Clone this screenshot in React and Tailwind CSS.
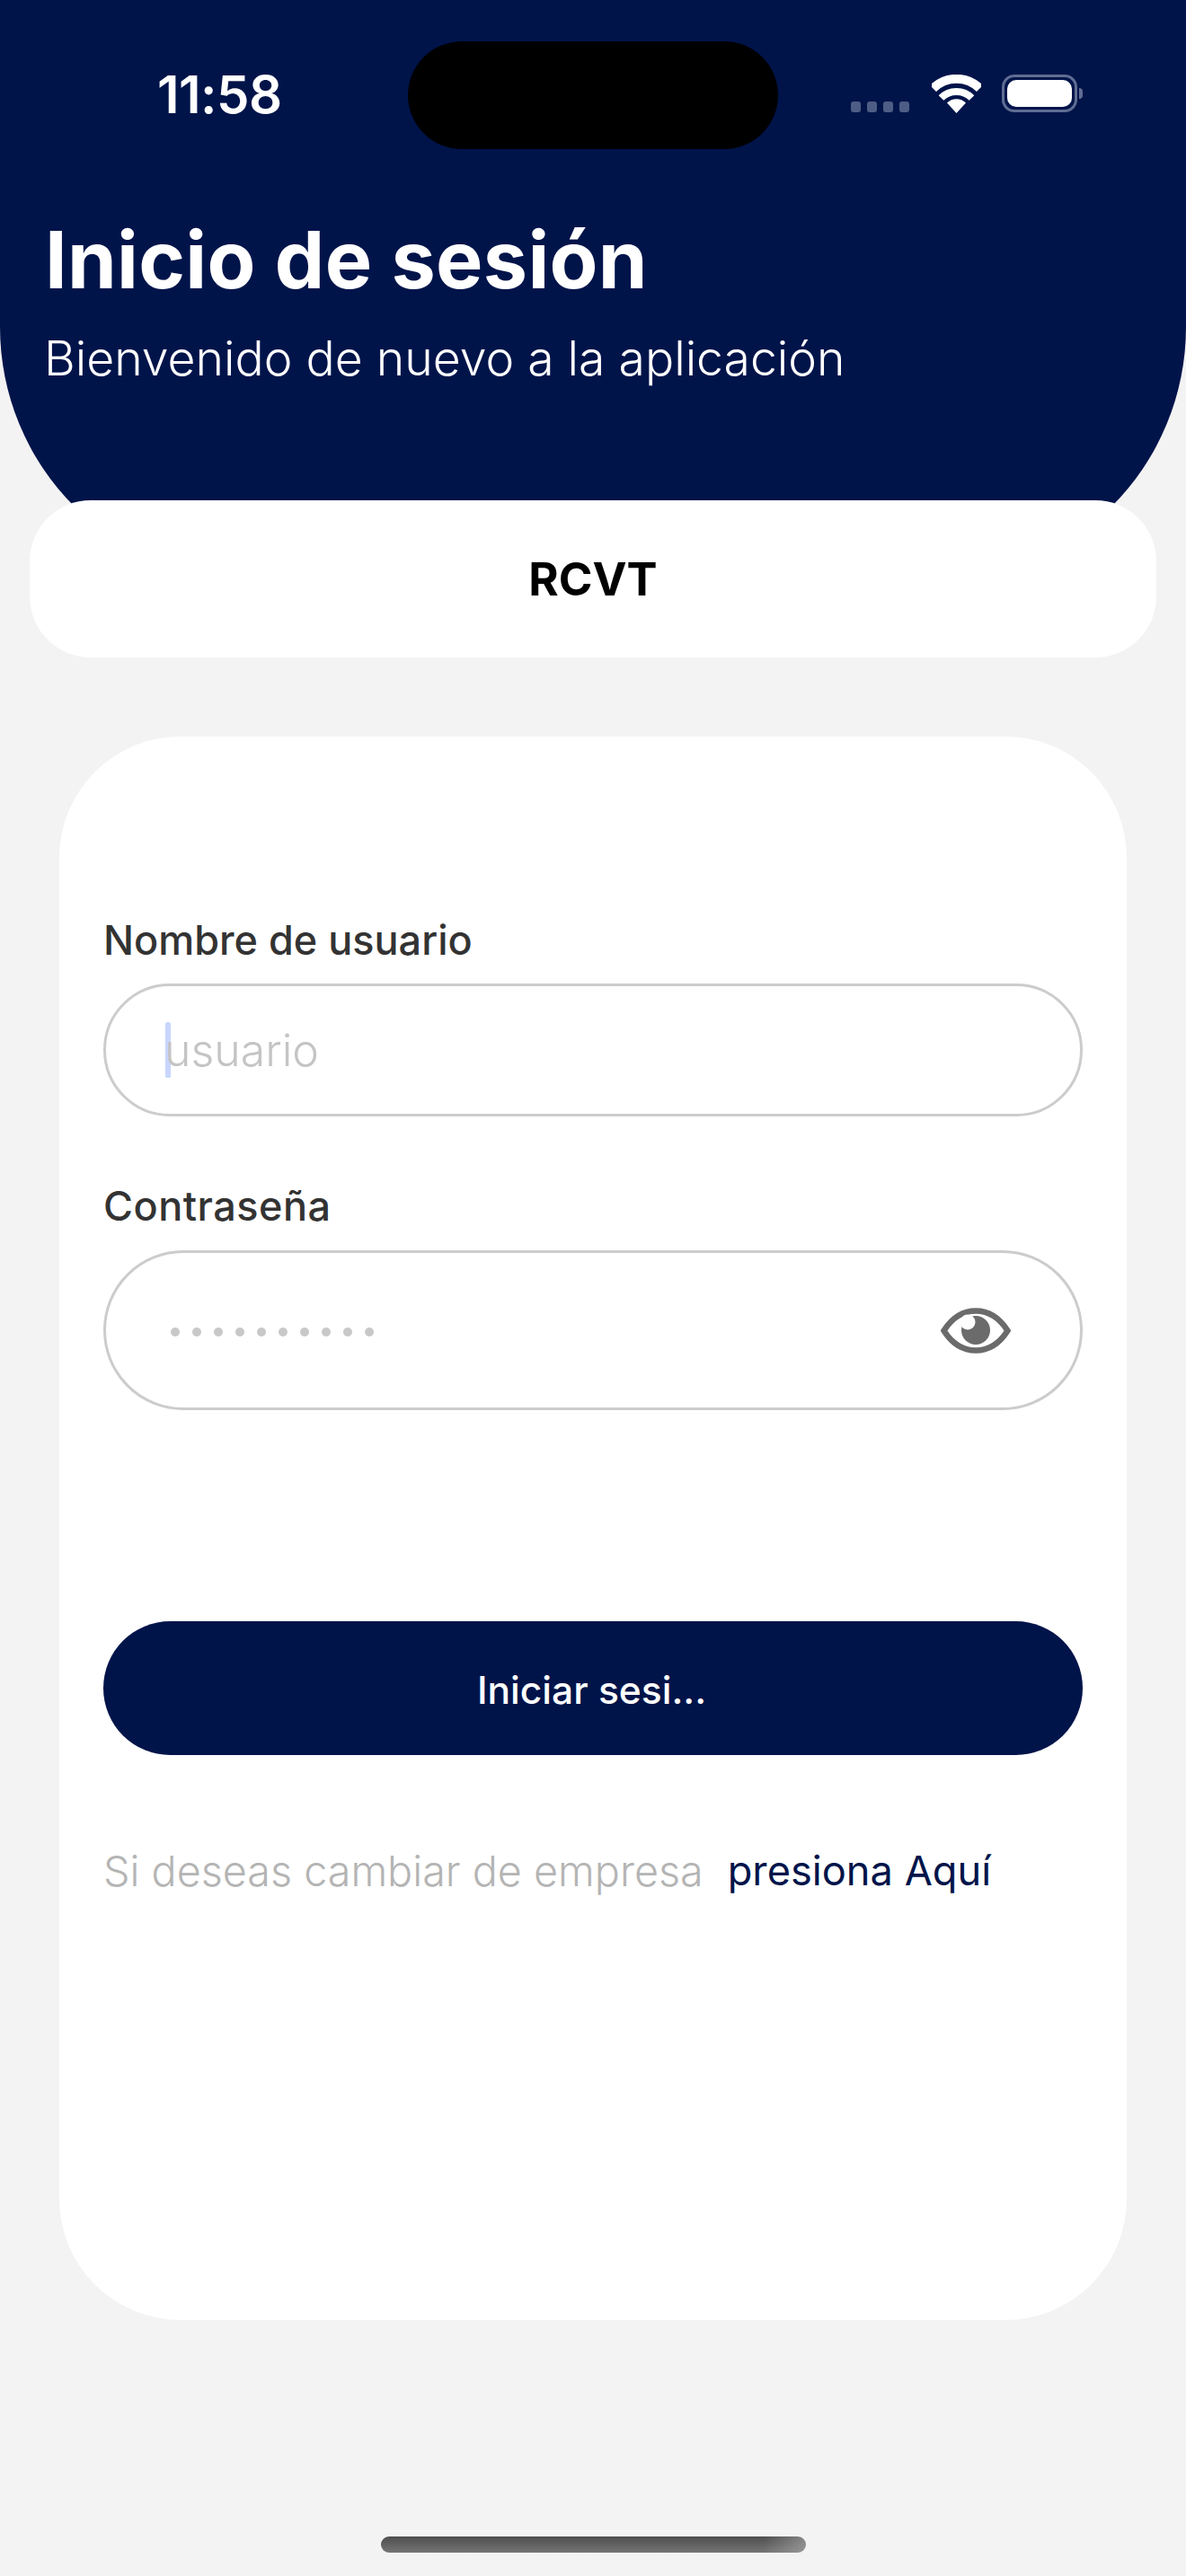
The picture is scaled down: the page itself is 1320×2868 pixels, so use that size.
import React from 'react'

function WifiIcon() {
  return (
    <svg viewBox="0 0 55 43" className="w-[55px] h-[43px]" fill="none">
      <path d="M1.5 15.5A37 37 0 0 1 53.5 15.5" stroke="#fff" strokeWidth="10" />
      <path d="M10.5 26A24 24 0 0 1 44.5 26" stroke="#fff" strokeWidth="8" />
      <path d="M27.5 43L17 31.5A15 15 0 0 1 38 31.5Z" fill="#fff" />
    </svg>
  )
}

function EyeIcon() {
  return (
    <svg viewBox="0 0 78 51" className="w-[78px] h-[51px]" fill="none">
      <path
        d="M3.5 25.5C14 9 26 3.5 39 3.5C52 3.5 64 9 74.5 25.5C64 42 52 47.5 39 47.5C26 47.5 14 42 3.5 25.5Z"
        stroke="#6b6b6b"
        strokeWidth="6.5"
      />
      <circle cx="39" cy="25" r="16" fill="#6b6b6b" />
      <circle cx="30" cy="16" r="8.5" fill="#fff" />
    </svg>
  )
}

export default function App() {
  return (
    <div className="w-[1320px] h-[2868px] bg-[#f3f3f3] flex flex-col items-center overflow-hidden font-['Inter',sans-serif]">
      {/* Header */}
      <div className="w-full h-[647px] shrink-0 bg-[#00144a] rounded-b-[283px] flex flex-col text-white">
        <div className="flex items-start pt-[46px] h-[166px] shrink-0">
          <div className="w-[175px] shrink-0" />
          <span className="w-[279px] shrink-0 mt-[29px] text-[58px] leading-[60px] font-semibold tracking-[-0.5px]">11:58</span>
          <div className="w-[412px] h-[120px] shrink-0 rounded-[60px] bg-black" />
          <div className="flex ml-[81px] mt-[67px] gap-[7px]">
            <span className="w-[11px] h-[12px] rounded-[3px] bg-[#4e5d85]" />
            <span className="w-[11px] h-[12px] rounded-[3px] bg-[#4e5d85]" />
            <span className="w-[11px] h-[12px] rounded-[3px] bg-[#4e5d85]" />
            <span className="w-[11px] h-[12px] rounded-[3px] bg-[#4e5d85]" />
          </div>
          <div className="ml-[25px] mt-[37px]">
            <WifiIcon />
          </div>
          <div className="flex items-center ml-[23px] mt-[37px]">
            <div className="w-[84px] h-[42px] rounded-[14px] border-[3px] border-[#5f6d92] p-[3px]">
              <div className="w-full h-full rounded-[10px] bg-white" />
            </div>
            <div className="w-[4px] h-[12px] rounded-r-full bg-[#5f6d92] ml-[2px]" />
          </div>
        </div>
        <h1 className="mt-[73px] ml-[50px] text-[88px] leading-[100px] font-bold tracking-[0.3px]">Inicio de sesión</h1>
        <p className="mt-[30px] ml-[49px] text-[53.5px] leading-[60px] font-light">Bienvenido de nuevo a la aplicación</p>
      </div>

      {/* Empresa */}
      <div className="w-[1254px] h-[175px] shrink-0 -mt-[90px] rounded-[68px] bg-white flex items-center justify-center">
        <span className="text-[51px] leading-[60px] font-bold text-black">RCVT</span>
      </div>

      {/* Formulario */}
      <div className="w-[1188px] h-[1763px] shrink-0 mt-[88px] rounded-[135px] bg-white px-[49px] pt-[197px] flex flex-col">
        <label className="text-[45px] leading-[60px] font-medium text-[#333333]">Nombre de usuario</label>
        <div className="mt-[18px] h-[148px] rounded-[74px] border-[3px] border-[#cccccc] flex items-center pl-[66px]">
          <span className="w-[6px] h-[62px] rounded-[2px] bg-[#c7d6ff] shrink-0" />
          <span className="-ml-[7px] text-[50px] leading-[60px] font-light text-[#c4c4c4]">usuario</span>
        </div>
        <label className="mt-[70px] text-[45px] leading-[60px] font-medium text-[#333333] tracking-[0.5px]">Contraseña</label>
        <div className="mt-[19px] h-[178px] rounded-[89px] border-[3px] border-[#cccccc] flex items-center justify-between pl-[72px] pr-[77px]">
          <div className="flex gap-[14px] mt-[4px]">
            {Array.from({ length: 10 }).map((_, i) => (
              <span key={i} className="w-[10px] h-[10px] rounded-full bg-[#c8c8c8]" />
            ))}
          </div>
          <EyeIcon />
        </div>
        <button className="mt-[235px] h-[149px] rounded-[75px] bg-[#00144a] text-white text-[42.5px] leading-[60px] font-medium pt-[4px] pr-[3px]">Iniciar sesi...</button>
        <div className="mt-[99px] flex items-center leading-[60px]">
          <span className="text-[46.7px] font-light text-[#b4b4b4]">Si deseas cambiar de empresa</span>
          <span className="ml-[27px] text-[45.2px] text-[#00144a]">presiona Aquí</span>
        </div>
      </div>

      {/* Home indicator */}
      <div className="w-[473px] h-[18px] shrink-0 mt-[241px] rounded-full bg-[linear-gradient(90deg,transparent_90%,#b0b0b090_100%),linear-gradient(180deg,#4e4e4e,#757575)]" />
    </div>
  )
}
